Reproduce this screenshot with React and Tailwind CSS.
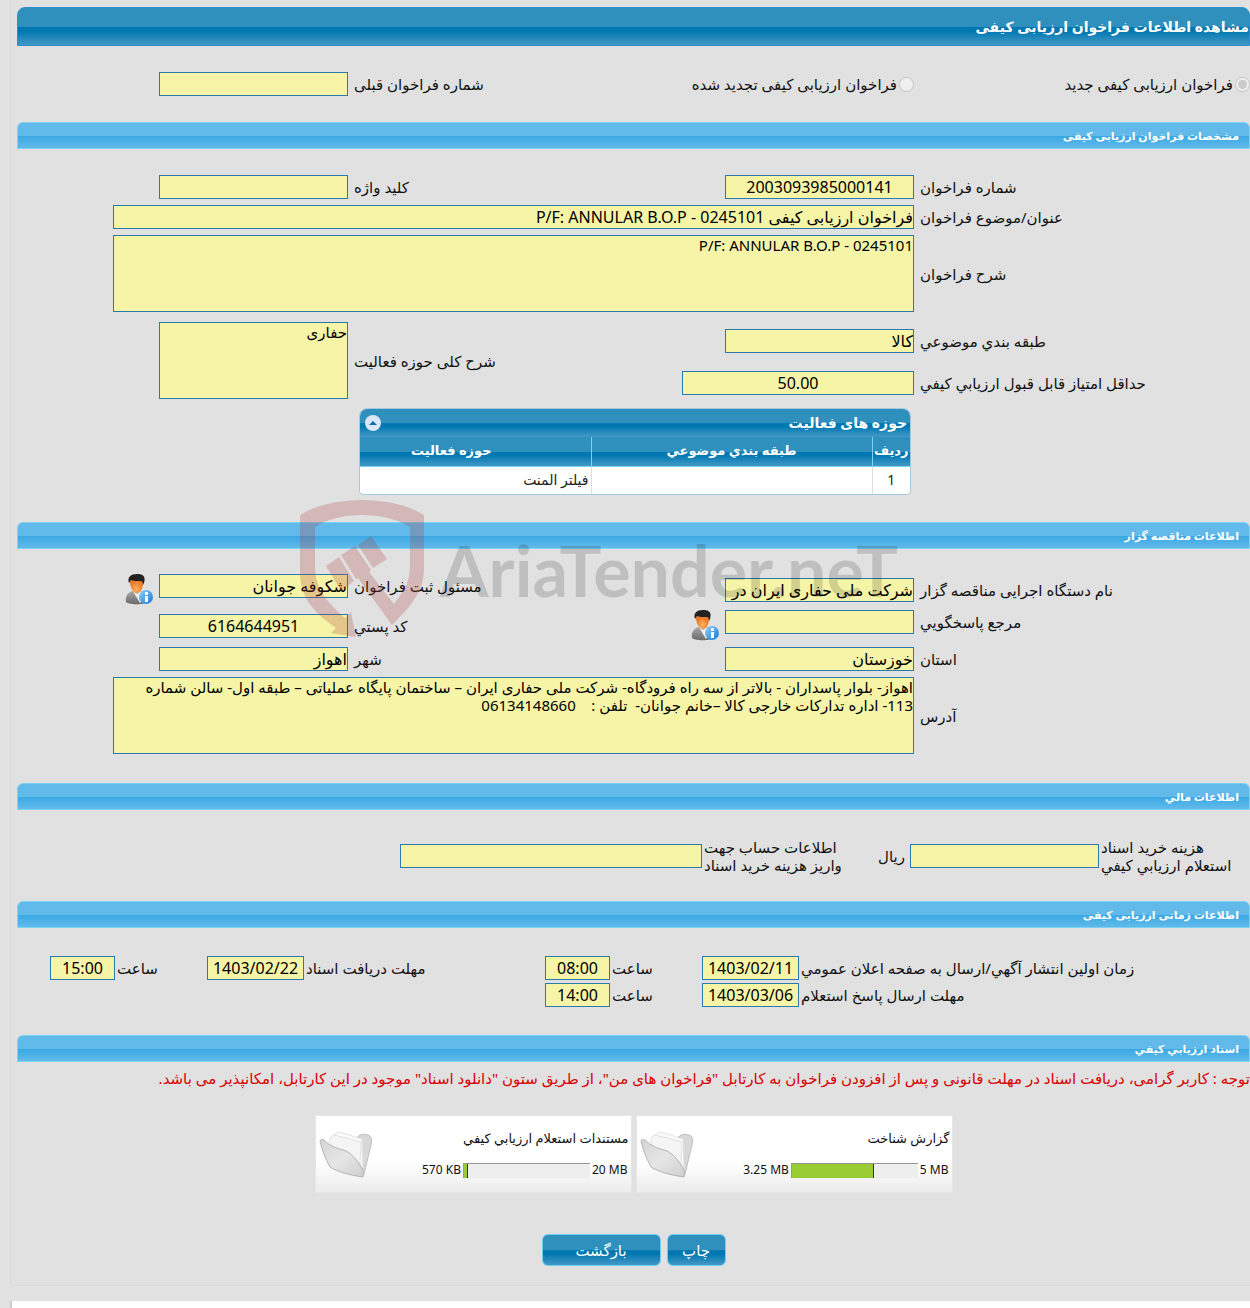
import React, { useId } from 'react';
import clsx from 'clsx';

const darkBar =
  'bg-[linear-gradient(to_bottom,#2f90be_0%,#2f90be_50%,#0077b0_52%,#0077b0_62%,#4499c6_100%)]';

const formGrid = 'grid grid-cols-[336fr_230fr_336fr_331fr]';

function SectionTitle({ children }) {
  return (
    <h2 className="flex h-[27px] items-center rounded-t-md border border-[#7ad3f5] bg-[linear-gradient(to_bottom,#62baea_0%,#62baea_50%,#3aa8e3_52%,#62baea_100%)] px-[10px] text-[11px] font-bold text-white">
      {children}
    </h2>
  );
}

const boxStyle = 'border border-[#2a7aae] bg-[#f6f4a6] text-black outline-none';

function Box({ id, value = '', className = 'w-[189px]', center = false }) {
  return (
    <input
      id={id}
      type="text"
      readOnly
      value={value}
      className={clsx(boxStyle, 'h-[24px] shrink-0 text-[16px]', center && 'text-center', className)}
    />
  );
}

function Area({ id, value, className }) {
  return (
    <textarea
      id={id}
      readOnly
      value={value}
      className={clsx(boxStyle, 'block h-[77px] shrink-0 resize-none overflow-hidden text-[15px] leading-[18px]', className)}
    />
  );
}

// label cell + field cell of the four column form grid
function Field({ label, value, center, area, user, className, boxClass, wide, align = 'items-center' }) {
  const id = useId();
  return (
    <>
      <div className={clsx('flex justify-end pe-[6px]', align, className)}>
        <label htmlFor={id} className="leading-[24px] whitespace-nowrap">{label}</label>
      </div>
      <div className={clsx('flex min-w-0', align, wide && 'col-span-3', className)}>
        {area ? (
          <Area id={id} value={value} className={boxClass} />
        ) : (
          <Box id={id} value={value} center={center} className={boxClass} />
        )}
        {user && (
          <button type="button" aria-label="اطلاعات کاربر" className="-mb-[6px] ms-[5px]">
            <UserInfoIcon />
          </button>
        )}
      </div>
    </>
  );
}

function UserInfoIcon() {
  return (
    <svg width="29" height="31" viewBox="0 0 29 31">
      <defs>
        <linearGradient id="suit" x1="0" y1="0" x2="0" y2="1">
          <stop offset="0" stopColor="#a8a8a8" />
          <stop offset="1" stopColor="#6a6a6a" />
        </linearGradient>
        <radialGradient id="face" cy="0.75">
          <stop offset="0" stopColor="#ffb35a" />
          <stop offset="1" stopColor="#e8772a" />
        </radialGradient>
        <linearGradient id="info" x1="0" y1="0" x2="1" y2="1">
          <stop offset="0" stopColor="#8fd0f8" />
          <stop offset="1" stopColor="#1676d2" />
        </linearGradient>
      </defs>
      <path d="M1 28c-1-6 2-9 6-11l5 2 4-2c4 1 6 4 6 11-3 3-18 3-21 0z" fill="url(#suit)" />
      <path d="M8 17l4 3 4-3 2 9-3 3-3-5z" fill="#f2f2f2" />
      <path d="M5 7c0-3 3-4 7-4s6 2 6 5c0 6-2 11-6 11S5 13 5 7z" fill="url(#face)" />
      <path d="M4 9C2 3 6 0 12 0s9 2 7 9l-1 2c0-3-1-4-2-4-4 0-8 0-10-1-1 1-1 2-2 3z" fill="#222" />
      <circle cx="21" cy="23" r="7" fill="url(#info)" />
      <rect x="20" y="22" width="3" height="6" fill="#fff" />
      <rect x="20" y="18" width="3" height="3" fill="#fff" />
    </svg>
  );
}

function FolderIcon() {
  return (
    <svg width="54" height="50" viewBox="0 0 54 50">
      <defs>
        <linearGradient id="front" x1="0" y1="0" x2="1" y2="1">
          <stop offset="0" stopColor="#d4d4d4" />
          <stop offset="0.5" stopColor="#e6e6e6" />
          <stop offset="1" stopColor="#cfcfcf" />
        </linearGradient>
      </defs>
      <path d="M14 10l22-2 5-4c4-1 7-1 10 1 2 2 2 5 1 9l-7 29-3 3z" fill="#d8d8d8" stroke="#bfbfbf" />
      <path d="M15 4l4-3 12 3 8 3 4 1 1 30-28-9z" fill="#fbfbfb" stroke="#e2e2e2" />
      <path d="M10 10l4-6 14 3 14 4-1 24-20-6z" fill="#f5f5f5" stroke="#e2e2e2" />
      <path d="M1 10c0-1 2-2 4-1 6 6 12 8 19 10 8 2 14 10 19 18 1 3 2 6 1 9-14-2-25-5-33-10C6 27 3 19 1 10z" fill="url(#front)" stroke="#b4b4b4" />
    </svg>
  );
}

function Watermark() {
  return (
    <div dir="ltr" className="pointer-events-none absolute -top-[22px] left-[283px] flex items-start">
      <svg width="126" height="138" viewBox="0 0 126 138" fill="#b13d3d" fillOpacity="0.25">
        <path d="M0 15Q25 0 62 0T124 15V68C124 92 110 107 92 125L58 78 56 79 41 55 55 46 71 70 69 72 94 104C105 89 110 82 110 66V27Q90 15 62 15T15 27V68C15 90 30 105 45 118L51 112 56 137 31 133 36 128C10 110 0 95 0 70Z" />
        <path d="M58 45L71 36 87 59 73 68ZM26 66L39 57 54 81 41 91Z" />
      </svg>
      <span className="ms-[14px] mt-[24px] font-['Lato','Liberation_Sans',sans-serif] text-[70px] leading-[92px] font-bold whitespace-nowrap text-black/15">
        AriaTender.neT
      </span>
    </div>
  );
}

const documents = [
  { title: 'گزارش شناخت', used: '3.25 MB', max: '5 MB', percent: 65 },
  { title: 'مستندات استعلام ارزيابي کيفي', used: '570 KB', max: '20 MB', percent: 3 },
];

function DocumentCard({ title, used, max, percent }) {
  return (
    <article className="flex h-[78px] w-[317px] justify-between border border-[#e6e6e6] bg-linear-to-b from-white from-60% to-[#ececec]">
      <div className="flex-1 pt-[12px]">
        <h3 className="px-[2px] text-[13px] leading-[20px]">{title}</h3>
        <div className="mt-[12px] flex h-[20px] items-center gap-[2px] ps-[3px] text-[12px]">
          <span dir="ltr">{max}</span>
          <div className="flex h-[15px] w-[127px] justify-end border-t border-l border-[#999] bg-[#eee]">
            <div className="border-r border-[#333] bg-[#9c3]" style={{ width: `${percent}%` }} />
          </div>
          <span dir="ltr">{used}</span>
        </div>
      </div>
      <button type="button" aria-label={title} className="me-[3px] mt-[15px] h-[50px]">
        <FolderIcon />
      </button>
    </article>
  );
}

function ActivityTable() {
  const head = clsx(darkBar, 'h-[29px] border-b border-[#7ad3f5] pb-[3px] text-[13px] font-bold text-white');
  return (
    <div className="w-[552px] overflow-hidden rounded-t-lg rounded-b-sm border border-[#a5c8dc] bg-white">
      <div className={clsx(darkBar, 'flex h-[28px] items-center justify-between ps-[3px] pe-[5px]')}>
        <h3 className="text-[14px] font-bold text-white">حوزه های فعالیت</h3>
        <button type="button" aria-label="بستن" className="flex size-[16px] items-center justify-center rounded-full bg-[#dbe6f7]">
          <svg width="8" height="4" viewBox="0 0 8 4">
            <path d="M4 0L8 4H0z" fill="#0a72a8" />
          </svg>
        </button>
      </div>
      <table className="w-full table-fixed border-collapse">
        <thead>
          <tr>
            <th className={clsx(head, 'w-[38px]')}>ردیف</th>
            <th className={clsx(head, 'w-[281px] border-r')}>طبقه بندي موضوعي</th>
            <th className={clsx(head, 'border-r ps-[48px]')}>حوزه فعالیت</th>
          </tr>
        </thead>
        <tbody>
          <tr className="h-[28px] text-[14px] text-[#222]">
            <td className="text-center">1</td>
            <td className="border-r border-[#ddd]" />
            <td className="border-r border-[#ddd] ps-[2px]">فیلتر المنت</td>
          </tr>
        </tbody>
      </table>
    </div>
  );
}

function DateTimeField({ label, date, time, className }) {
  const dateId = useId();
  const timeId = useId();
  return (
    <div className={clsx('flex items-center', className)}>
      <label htmlFor={dateId} className="flex-1 pe-[2px] text-end whitespace-nowrap">{label}</label>
      <Box id={dateId} value={date} center className="w-[97px]" />
      <label htmlFor={timeId} className="w-[92px] pe-[2px] text-end">ساعت</label>
      <Box id={timeId} value={time} center className="w-[65px]" />
    </div>
  );
}

function ActionButton({ children, className }) {
  return (
    <button
      type="button"
      className={clsx(darkBar, 'h-[32px] rounded-md border border-[#6fcdf0] text-[15px] text-white', className)}
    >
      {children}
    </button>
  );
}

export default function App() {
  return (
    <div
      dir="rtl"
      className="flex min-h-screen flex-col overflow-x-hidden bg-[#e1e1e1] pl-[10px] font-['Noto_Sans','DejaVu_Sans',sans-serif] text-[15px] leading-[18px] text-[#111]"
    >
      <main className="border-b border-l border-[#dadada] pt-[7px] pb-[19px] pl-[6px]">
        <h1 className={clsx(darkBar, 'flex h-[39px] items-center rounded-t-lg border border-[#2a8fd0] text-[14px] font-bold text-white')}>
          مشاهده اطلاعات فراخوان ارزیابی کیفی
        </h1>

        <div className={clsx(formGrid, 'py-[26px]')}>
          <label className="flex items-center gap-[2px]">
            <input type="radio" name="kind" disabled defaultChecked className="size-[15px]" />
            فراخوان ارزیابی کیفی جدید
          </label>
          <label className="flex items-center gap-[2px] whitespace-nowrap">
            <input type="radio" name="kind" disabled className="size-[15px]" />
            فراخوان ارزیابی کیفی تجدید شده
          </label>
          <Field label="شماره فراخوان قبلی" />
        </div>

        <section>
          <SectionTitle>مشخصات فراخوان ارزیابی کیفی</SectionTitle>
          <div className={clsx(formGrid, 'gap-y-[6px] pt-[26px]')}>
            <Field label="شماره فراخوان" value="2003093985000141" center />
            <Field label="کلید واژه" />
            <Field
              wide
              label="عنوان/موضوع فراخوان"
              value="فراخوان ارزیابی کیفی P/F: ANNULAR B.O.P - 0245101"
              boxClass="w-[801px]"
            />
            <Field wide area label="شرح فراخوان" value="P/F: ANNULAR B.O.P - 0245101" boxClass="w-[801px]" />
          </div>
          <div className="grid grid-cols-[566fr_667fr] pt-[10px] pb-[9px]">
            <div className="grid grid-cols-[336fr_230fr] content-center gap-y-[18px] pt-[2px]">
              <Field label="طبقه بندي موضوعي" value="کالا" />
              <Field label="حداقل امتیاز قابل قبول ارزیابي کیفي" value="50.00" center boxClass="w-[232px]" />
            </div>
            <div className="grid grid-cols-[336fr_331fr]">
              <Field area label="شرح کلی حوزه فعالیت" value="حفاری" boxClass="w-[189px]" />
            </div>
          </div>
          <div className={formGrid}>
            <div className="col-span-3 col-start-2 ps-[3px]">
              <ActivityTable />
            </div>
          </div>
        </section>

        <section className="relative mt-[27px]">
          <SectionTitle>اطلاعات مناقصه گزار</SectionTitle>
          <div className={clsx(formGrid, 'pt-[25px]')}>
            <Field label="نام دستگاه اجرایی مناقصه گزار" value="شرکت ملی حفاری ایران در" align="items-end" />
            <Field label="مسئول ثبت فراخوان" value="شکوفه جوانان" user className="h-[28px]" align="items-start" />
            <Field label="مرجع پاسخگویي" user className="mt-[8px] h-[28px]" align="items-start" />
            <Field label="کد پستي" value="6164644951" center className="mt-[8px] h-[28px]" align="items-end" />
            <Field label="استان" value="خوزستان" className="mt-[9px]" />
            <Field label="شهر" value="اهواز" className="mt-[9px]" />
            <Field
              wide
              area
              label="آدرس"
              className="mt-[6px]"
              boxClass="w-[801px]"
              value={
                'اهواز- بلوار پاسداران - بالاتر از سه راه فرودگاه- شرکت ملی حفاری ایران – ساختمان پایگاه عملیاتی – طبقه اول- سالن شماره 113- اداره تدارکات خارجی کالا –خانم جوانان-  تلفن :    06134148660'
              }
            />
          </div>
          <Watermark />
        </section>

        <section className="mt-[29px]">
          <SectionTitle>اطلاعات مالي</SectionTitle>
          <div className="flex items-center ps-[12px] pt-[28px] pb-[27px]">
            <label htmlFor="fee" className="w-[139px] pe-[2px] text-end">
              هزینه خرید اسناد
              <br />
              استعلام ارزیابي کیفي
            </label>
            <Box id="fee" />
            <span className="w-[68px] ps-[5px]">ریال</span>
            <label htmlFor="account" className="w-[140px] pe-[2px] text-end">
              اطلاعات حساب جهت
              <br />
              واریز هزینه خرید اسناد
            </label>
            <Box id="account" className="w-[302px]" />
          </div>
        </section>

        <section>
          <SectionTitle>اطلاعات زمانی ارزیابی کیفی</SectionTitle>
          <div className="grid grid-cols-[705fr_528fr] gap-y-[3px] pt-[28px] pb-[28px]">
            <DateTimeField label="زمان اولین انتشار آگهي/ارسال به صفحه اعلان عمومي" date="1403/02/11" time="08:00" />
            <DateTimeField label="مهلت دریافت اسناد" date="1403/02/22" time="15:00" className="pe-[33px]" />
            <DateTimeField label="مهلت ارسال پاسخ استعلام" date="1403/03/06" time="14:00" />
          </div>
        </section>

        <section>
          <SectionTitle>اسناد ارزیابي کیفي</SectionTitle>
          <p className="mt-[6px] leading-[20px] text-[#d90000]">
            توجه : کاربر گرامی، دریافت اسناد در مهلت قانونی و پس از افزودن فراخوان به کارتابل "فراخوان های من"، از طریق ستون "دانلود اسناد" موجود در این کارتابل، امکانپذیر می باشد.
          </p>
          <div className="mt-[27px] flex justify-center gap-[4px]">
            {documents.map((doc) => (
              <DocumentCard key={doc.title} {...doc} />
            ))}
          </div>
        </section>

        <div className="mt-[41px] flex justify-center gap-[6px]">
          <ActionButton className="w-[59px]">چاپ</ActionButton>
          <ActionButton className="w-[119px]">بازگشت</ActionButton>
        </div>
      </main>

      <footer className="mt-[15px] min-h-[7px] flex-1 border-l-2 border-[#ccc] bg-white" />
    </div>
  );
}
